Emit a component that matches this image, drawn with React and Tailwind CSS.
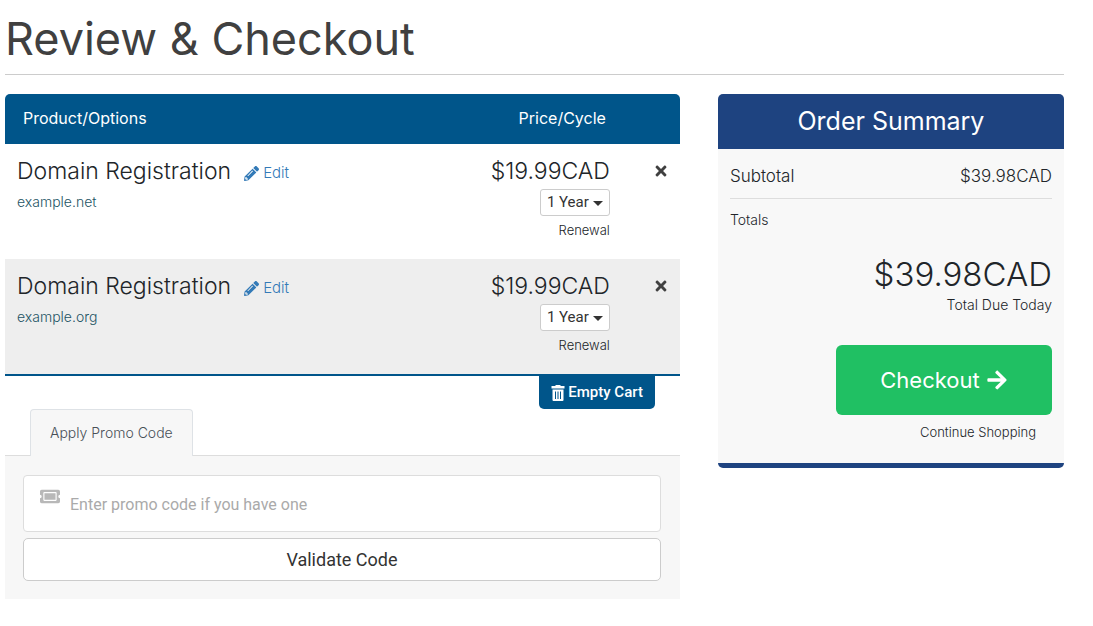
import { FaArrowRight, FaPencilAlt, FaTicketAlt, FaTimes } from "react-icons/fa";

const items = [
    { id: 1, name: "Domain Registration", domain: "example.net", price: "$19.99CAD" },
    { id: 2, name: "Domain Registration", domain: "example.org", price: "$19.99CAD" },
];

function TrashIcon() {
    return (
        <svg viewBox="0 0 14 16" className="h-4 w-3.5" fill="currentColor" aria-hidden="true">
            <path
                fillRule="evenodd"
                d="M4.500 0h5v1H13.500V3.500H.5V1h4zM1.500 4.500h11V15a1 1 0 0 1-1 1h-9a1 1 0 0 1-1-1zM4 6.500V14h1V6.500zM6.500 6.500V14h1V6.500zM9 6.500V14h1V6.500z"
            />
        </svg>
    );
}

function CartRow({ item }) {
    return (
        <tr className="h-[115px] align-top even:bg-[#eeeeee]">
            <td className="pt-[11px] pl-3">
                <div className="flex items-center gap-[13px]">
                    <span className="text-[23px] leading-8 font-light text-[#212529]">{item.name}</span>
                    <a href="#edit" className="mt-1 flex items-center gap-1 text-[15px] leading-6 font-light text-[#337ab7]">
                        <FaPencilAlt className="size-[15px]" />
                        Edit
                    </a>
                </div>
                <p className="mt-[3px] text-sm leading-6 font-light text-[#1d5464]">{item.domain}</p>
            </td>
            <td className="pt-[11px] text-right">
                <p className="text-[23px] leading-8 font-light text-[#212529]">{item.price}</p>
                <div className="mt-0.5 inline-grid w-[70px] items-center">
                    <select
                        aria-label={`Billing cycle for ${item.domain}`}
                        className="col-start-1 row-start-1 h-[27px] w-full appearance-none rounded-[3px] border border-[#cccccc] bg-white pr-4 pb-0.5 pl-1.5 font-[Roboto] text-[15px] leading-5 text-[#333333]"
                    >
                        <option>1 Year</option>
                        <option>2 Years</option>
                    </select>
                    <svg
                        viewBox="0 0 10 5"
                        className="pointer-events-none col-start-1 row-start-1 mt-0.5 mr-[7px] h-[5px] w-2.5 justify-self-end text-[#333333]"
                        fill="currentColor"
                        aria-hidden="true"
                    >
                        <path d="M0 0h10L5 5z" />
                    </svg>
                </div>
                <p className="mt-1 text-[13px] leading-5 font-light text-[#212529]">Renewal</p>
            </td>
            <td className="pt-[17px] pr-[11px] text-right">
                <button type="button" aria-label={`Remove ${item.domain}`} className="text-[#404040]">
                    <FaTimes className="size-4" />
                </button>
            </td>
        </tr>
    );
}

function PromoCode() {
    return (
        <section>
            <div className="-mb-px flex pl-[25px]">
                <button
                    type="button"
                    className="relative h-[47px] rounded-t-[4px] border border-b-0 border-[#dee2e6] bg-[#f7f7f7] px-[19px] text-sm font-light text-[#495057]"
                >
                    Apply Promo Code
                </button>
            </div>
            <form className="border-t border-[#dddddd] bg-[#f7f7f7] pt-[19px] pr-[19px] pb-[18px] pl-[18px] font-[Roboto]">
                <label className="flex h-[57px] items-center gap-2.5 rounded-[4px] border border-[#dddddd] bg-white pl-4">
                    <FaTicketAlt className="mb-3.5 size-[21px] text-[#b8b8b8]" />
                    <input
                        type="text"
                        aria-label="Promo code"
                        placeholder="Enter promo code if you have one"
                        className="w-full pt-0.5 text-base text-[#555555] outline-none placeholder:text-[#aaaaaa]"
                    />
                </label>
                <button
                    type="button"
                    className="mt-1.5 h-[43px] w-full rounded-[5px] border border-[#cccccc] bg-white text-lg text-[#333333]"
                >
                    Validate Code
                </button>
            </form>
        </section>
    );
}

function OrderSummary() {
    return (
        <aside className="rounded-[5px] border-b-5 border-[#1e4380] bg-[#f8f8f8] text-[#212529]">
            <h2 className="rounded-t-[5px] bg-[#1e4380] py-2.5 text-center text-[25px] leading-[35px] text-white">
                Order Summary
            </h2>
            <div className="px-3 pt-3 pb-[21px] font-light">
                <div className="flex justify-between border-b border-[#dddddd] pt-[3px] pb-[10px] text-[17px] leading-6">
                    <span>Subtotal</span>
                    <span>$39.98CAD</span>
                </div>
                <p className="mt-[11px] text-sm leading-5">Totals</p>
                <div className="mt-6 text-right">
                    <p className="text-[33px] leading-[41px]">$39.98CAD</p>
                    <p className="text-sm leading-5">Total Due Today</p>
                </div>
                <div className="mt-[30px] flex flex-col items-end">
                    <button
                        type="button"
                        className="flex h-[70px] w-[216px] items-center justify-center gap-1.5 rounded-[6px] bg-[#20c063] text-[22px] font-normal text-white"
                    >
                        Checkout
                        <FaArrowRight className="size-[22px]" />
                    </button>
                    <a href="#shop" className="mt-[7px] mr-4 text-[13px] leading-5">
                        Continue Shopping
                    </a>
                </div>
            </div>
        </aside>
    );
}

export default function App() {
    return (
        <main className="pl-[5px] pr-[29px] pb-6 font-[Inter,sans-serif]">
            <h1 className="border-b border-[#cccccc] pt-[11px] pb-2 text-[45px] leading-[55px] text-[#404040]">
                Review &amp; Checkout
            </h1>

            <div className="mt-[19px] grid grid-cols-[39fr_20fr] items-start gap-[38px]">
                <div>
                    <table className="w-full border-separate border-spacing-0 border-b-2 border-[#00558a]">
                        <thead>
                            <tr className="h-[50px] text-base text-white">
                                <th className="rounded-tl-[5px] bg-[#00558a] pb-0.5 pl-[18px] text-left font-normal">Product/Options</th>
                                <th className="w-[170px] bg-[#00558a] pr-1 pb-0.5 text-right font-normal">Price/Cycle</th>
                                <th className="w-[70px] rounded-tr-[5px] bg-[#00558a]"></th>
                            </tr>
                        </thead>
                        <tbody>
                            {items.map((item) => (
                                <CartRow key={item.id} item={item} />
                            ))}
                        </tbody>
                    </table>
                    <div className="flex justify-end pr-[25px]">
                        <button
                            type="button"
                            className="flex h-[33px] items-center gap-[3px] rounded-b-[5px] bg-[#00558a] px-3 font-[Roboto] text-[15px] font-medium text-white"
                        >
                            <TrashIcon />
                            Empty Cart
                        </button>
                    </div>
                    <PromoCode />
                </div>
                <OrderSummary />
            </div>
        </main>
    );
}
